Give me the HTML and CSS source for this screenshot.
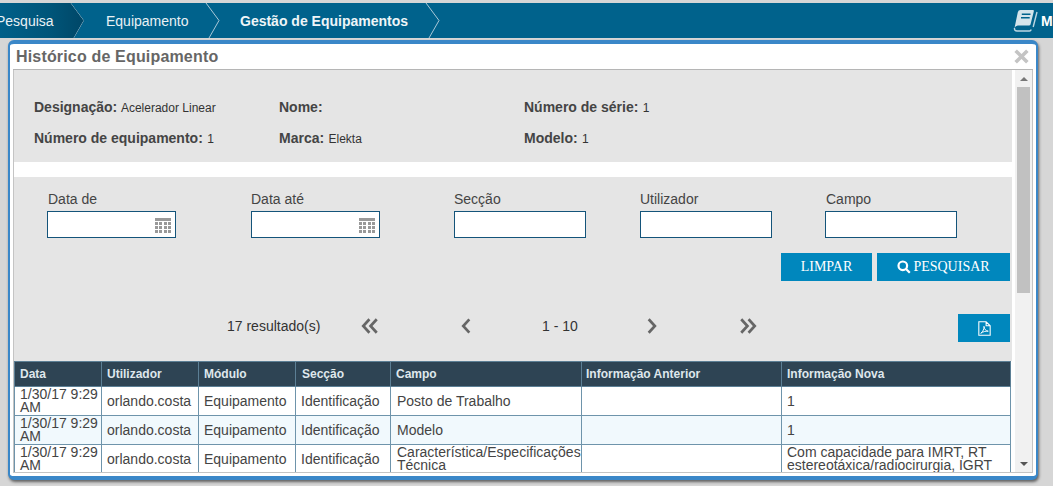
FILE: index.html
```html
<!DOCTYPE html>
<html lang="pt">
<head>
<meta charset="utf-8">
<title>Histórico de Equipamento</title>
<link rel="stylesheet" href="styles.css">
</head>
<body>
<header class="topbar">
  <nav class="crumbs">
    <a class="crumb crumb-first">Pesquisa<svg class="chev" viewBox="0 0 16 35"><path d="M1 0 L14 17.5 L4 35" /></svg></a>
    <a class="crumb crumb-second">Equipamento<svg class="chev" viewBox="0 0 16 35"><path d="M1 0 L14 17.5 L4 35" /></svg></a>
    <a class="crumb crumb-third">Gestão de Equipamentos<svg class="chev" viewBox="0 0 16 35"><path d="M1 0 L14 17.5 L4 35" /></svg></a>
  </nav>
  <div class="manual">
    <svg class="book" viewBox="0 0 25 23"><path class="book-body" d="M7.500 1 H20 Q21.200 1 20.800 2.500 L17.500 15.500 Q17.200 16.500 16 16.500 H5 Q2.500 16.800 1.500 19 L4.800 3.200 Q5.300 1 7.500 1Z"/><path class="book-base" d="M1.500 19 Q1.200 22 4 22 H16.500 Q17.800 22 18.200 20.500 M24 3 L20.200 18"/><path class="book-line" d="M8.800 5.200 H17.500 M8 8.800 H16.700"/></svg>
    <span class="manual-text">M</span>
  </div>
</header>

<section class="modal">
  <div class="modal-head">
    <h1 class="modal-title">Histórico de Equipamento</h1>
    <svg class="close" viewBox="0 0 16 16"><path d="M2.500 2.500 L13.500 13.500 M13.500 2.500 L2.500 13.500"/></svg>
  </div>
  <div class="modal-body">
    <div class="content">
      <div class="info">
        <div class="info-grid">
          <p class="info-item"><b>Designação:</b> Acelerador Linear</p>
          <p class="info-item"><b>Nome:</b></p>
          <p class="info-item"><b>Número de série:</b> 1</p>
          <p class="info-item"><b>Número de equipamento:</b> 1</p>
          <p class="info-item"><b>Marca:</b> Elekta</p>
          <p class="info-item"><b>Modelo:</b> 1</p>
        </div>
      </div>
      <div class="search">
        <div class="filters">
          <label class="field f1">Data de
            <span class="input"><svg class="cal" viewBox="0 0 16 15"><path d="M0 0H16V3H0ZM0 4H3V7H0ZM4 4H7V7H4ZM9 4H12V7H9ZM13 4H16V7H13ZM0 8H3V11H0ZM4 8H7V11H4ZM9 8H12V11H9ZM13 8H16V11H13ZM0 12H3V15H0ZM4 12H7V15H4ZM9 12H12V15H9ZM13 12H16V15H13Z"/></svg></span>
          </label>
          <label class="field f2">Data até
            <span class="input"><svg class="cal" viewBox="0 0 16 15"><path d="M0 0H16V3H0ZM0 4H3V7H0ZM4 4H7V7H4ZM9 4H12V7H9ZM13 4H16V7H13ZM0 8H3V11H0ZM4 8H7V11H4ZM9 8H12V11H9ZM13 8H16V11H13ZM0 12H3V15H0ZM4 12H7V15H4ZM9 12H12V15H9ZM13 12H16V15H13Z"/></svg></span>
          </label>
          <label class="field f3">Secção<span class="input"></span></label>
          <label class="field f4">Utilizador<span class="input"></span></label>
          <label class="field f5">Campo<span class="input"></span></label>
        </div>
        <div class="actions">
          <button class="btn btn-clear">LIMPAR</button>
          <button class="btn btn-search"><svg class="lens" viewBox="0 0 14 14"><circle cx="5.800" cy="5.800" r="4.300"/><path d="M9 9 L12.800 12.800"/></svg>PESQUISAR</button>
        </div>
        <div class="pager">
          <span class="count">17 resultado(s)</span>
          <svg class="pg pg-first" viewBox="0 0 16 16"><path d="M7.500 2 L2 8 L7.500 14 M14 2 L8.500 8 L14 14"/></svg>
          <svg class="pg pg-prev" viewBox="0 0 9 16"><path d="M7.500 2 L2 8 L7.500 14"/></svg>
          <span class="range">1 - 10</span>
          <svg class="pg pg-next" viewBox="0 0 9 16"><path d="M1.500 2 L7 8 L1.500 14"/></svg>
          <svg class="pg pg-last" viewBox="0 0 16 16"><path d="M2 2 L7.500 8 L2 14 M8.500 2 L14 8 L8.500 14"/></svg>
          <button class="btn btn-pdf"><svg class="pdf" viewBox="0 0 12 14"><path class="pdf-page" d="M.7.700H7.500L11.300 4.500V13.300H.7Z M7.500.7V4.500H11.300"/><path class="pdf-mark" d="M2.500 11.500 C4.500 10 6 7 5.500 5 C6 8 7.500 9.500 9.500 9.500 C7 9.300 4.500 10 2.500 11.500Z"/></svg></button>
        </div>
      </div>
      <table class="grid">
        <colgroup>
          <col class="c1"><col class="c2"><col class="c3"><col class="c4"><col class="c5"><col class="c6"><col class="c7">
        </colgroup>
        <thead>
          <tr><th>Data</th><th>Utilizador</th><th>Módulo</th><th>Secção</th><th>Campo</th><th>Informação Anterior</th><th>Informação Nova</th></tr>
        </thead>
        <tbody>
          <tr><td>1/30/17 9:29 AM</td><td>orlando.costa</td><td>Equipamento</td><td>Identificação</td><td>Posto de Trabalho</td><td></td><td>1</td></tr>
          <tr class="alt"><td>1/30/17 9:29 AM</td><td>orlando.costa</td><td>Equipamento</td><td>Identificação</td><td>Modelo</td><td></td><td>1</td></tr>
          <tr><td>1/30/17 9:29 AM</td><td>orlando.costa</td><td>Equipamento</td><td>Identificação</td><td>Característica/Especificações Técnica</td><td></td><td>Com capacidade para IMRT, RT estereotáxica/radiocirurgia, IGRT</td></tr>
        </tbody>
      </table>
    </div>
    <div class="scrollbar">
      <span class="arrow arrow-up"></span>
      <span class="thumb"></span>
      <span class="arrow arrow-down"></span>
    </div>
  </div>
</section>
</body>
</html>
```
FILE: styles.css
```css
* { box-sizing: border-box; }
html, body { margin: 0; padding: 0; height: 486px; overflow: hidden; }
body {
  background: #d6d6d6;
  font-family: "Liberation Sans", Arial, sans-serif;
  color: #333;
  padding-top: 3px;
}
.topbar {
  height: 35px;
  background: #00628c;
  display: flex;
  justify-content: space-between;
  color: #fff;
  font-size: 14px;
}
.crumbs { display: flex; height: 35px; }
.crumb {
  position: relative;
  display: flex;
  align-items: center;
  height: 35px;
  color: #e9f1f5;
}
.crumb-first {
  width: 90px;
  margin-left: -4px;
  margin-right: -14px;
  background: linear-gradient(90deg, #00608a 0%, #005579 60%, #004666 100%);
  clip-path: polygon(0 0, 75px 0, 88px 17.500px, 78px 35px, 0 35px);
}
.crumb-second { width: 135px; padding-left: 34px; }
.crumb-third { width: 220px; padding-left: 33px; font-weight: 700; color: #eef5f8; }
.chev {
  position: absolute;
  right: -14px;
  top: 0;
  width: 16px;
  height: 35px;
  fill: none;
  stroke: #a9c8d7;
  stroke-width: 1;
}
.crumb-first .chev { right: 0; }
.manual { display: flex; align-items: center; gap: 3px; width: 40px; }
.book { width: 25px; height: 23px; fill: none; }
.book-body { fill: #d4e4eb; }
.book-base { stroke: #bcd6e2; stroke-width: 1.400; }
.book-line { stroke: #00628c; stroke-width: 1.600; }
.manual-text { font-weight: 700; font-size: 14px; }

.modal {
  position: absolute;
  left: 8px;
  top: 40px;
  width: 1030px;
  height: 440px;
  background: #fff;
  border: 2px solid #3a87c8;
  border-top-width: 4px;
  border-bottom-width: 4px;
  border-radius: 6px;
  box-shadow: 1px 2px 3px rgba(0, 0, 0, .55);
  display: flex;
  flex-direction: column;
}
.modal-head {
  height: 26px;
  flex: none;
  display: flex;
  justify-content: space-between;
  align-items: center;
  padding: 0 3px;
  border-bottom: 1px solid #b5b5b5;
  margin: 0 3px;
}
.modal-title { margin: 0; font-size: 16px; line-height: 25px; font-weight: 700; color: #666; letter-spacing: .17px; }
.close { width: 17px; height: 17px; fill: none; stroke: #c4c4c4; stroke-width: 3.400; }

.modal-body {
  flex: none;
  height: 403px;
  display: flex;
  margin: 0 3px;
  overflow: hidden;
  border: 1px solid #c4c4c4;
  border-top: 0;
}
.content { width: 1001px; flex: none; overflow: hidden; height: 402px; }

.info { height: 92px; margin-right: 3px; background: #e5e5e5; padding: 29px 20px 0; }
.info-grid { display: grid; grid-template-columns: 245px 245px 1fr; row-gap: 14px; }
.info-item { margin: 0; font-size: 12px; line-height: 16px; color: #333; white-space: nowrap; }
.info-item b { font-size: 14px; color: #444; margin-right: 1px; }

.search { margin: 15px 3px 0 0; height: 184px; background: #e5e5e5; padding-top: 15px; }
.filters { display: flex; height: 46px; padding-left: 33px; }
.field { display: flex; flex-direction: column; font-size: 14px; line-height: 14px; color: #444; }
.f1, .f5 { text-indent: 1px; }
.input {
  display: block;
  position: relative;
  height: 27px;
  margin-top: 5px;
  background: #fff;
  border: 1px solid #14547a;
}
.f1, .f2 { width: 129px; }
.f1 { margin-right: 75px; }
.f2 { margin-right: 74px; }
.f3, .f4, .f5 { width: 132px; }
.f3 { margin-right: 54px; }
.f4 { margin-right: 53px; }
.cal { position: absolute; right: 4px; top: 6px; width: 16px; height: 15px; fill: #999; }

.actions { display: flex; justify-content: flex-end; gap: 5px; margin-top: 15px; padding-right: 2px; }
.btn {
  border: 0;
  background: #0087bd;
  color: #fff;
  height: 28px;
  font-family: "Liberation Serif", "Times New Roman", serif;
  font-size: 14px;
  padding: 0;
  display: flex;
  align-items: center;
  justify-content: center;
}
.btn-clear { width: 91px; }
.btn-search { width: 133px; gap: 2px; }
.lens { width: 14px; height: 14px; fill: none; stroke: #fff; stroke-width: 2.200; }

.pager { display: flex; align-items: center; height: 28px; margin-top: 33px; padding-right: 2px; font-size: 14px; color: #333; }
.count { margin-left: 213px; width: 134px; margin-bottom: 4px; }
.pg { fill: none; stroke: #666; stroke-width: 2.400; height: 18px; flex: none; margin-bottom: 4px; }
.pg-first { width: 18px; }
.pg-prev { width: 10px; margin-left: 82px; }
.range { width: 176px; padding-left: 71px; flex: none; white-space: nowrap; margin-bottom: 4px; }
.pg-last { width: 18px; margin-left: 82px; }
.btn-pdf { width: 52px; margin-left: auto; }
.pdf { width: 13px; height: 15px; fill: none; }
.pdf-page { stroke: #fff; stroke-width: 1; }
.pdf-mark { stroke: #fff; stroke-width: .900; }

.grid {
  width: 996px;
  border-collapse: collapse;
  table-layout: fixed;
  font-size: 14px;
}
.c1 { width: 87px; } .c2 { width: 97px; } .c3 { width: 97px; } .c4 { width: 95px; }
.c5 { width: 191px; } .c6 { width: 200px; } .c7 { width: 229px; }
.grid th {
  background: #2e4454;
  color: #dfe7ec;
  font-size: 12px;
  text-align: left;
  height: 25px;
  padding: 0 5px;
  border: 1px solid #5c7f95;
  white-space: nowrap;
}
.grid th:nth-child(4) { padding-left: 6px; }
.grid th:nth-child(6) { padding-left: 4px; }
.grid td {
  height: 29px;
  padding: 0 5px;
  line-height: 13px;
  background: #fff;
  color: #444;
  border: 1px solid #6e94ab;
  vertical-align: middle;
  overflow: hidden;
}
.grid td:first-child { padding-right: 2px; }
.grid td:nth-child(5) { padding: 0 0 0 6px; white-space: normal; }
.grid .alt td { background: #f1f9fd; }

.scrollbar {
  width: 17px;
  flex: none;
  height: 402px;
  background: #f1f1f1;
  display: flex;
  flex-direction: column;
  align-items: center;
}
.arrow { width: 0; height: 0; border-left: 4px solid transparent; border-right: 4px solid transparent; flex: none; }
.arrow-up { border-bottom: 4px solid #777; margin-top: 7px; margin-bottom: 6px; }
.arrow-down { border-top: 4px solid #555; margin-top: auto; margin-bottom: 6px; }
.thumb { width: 13px; height: 206px; background: #c1c1c1; flex: none; }
```
